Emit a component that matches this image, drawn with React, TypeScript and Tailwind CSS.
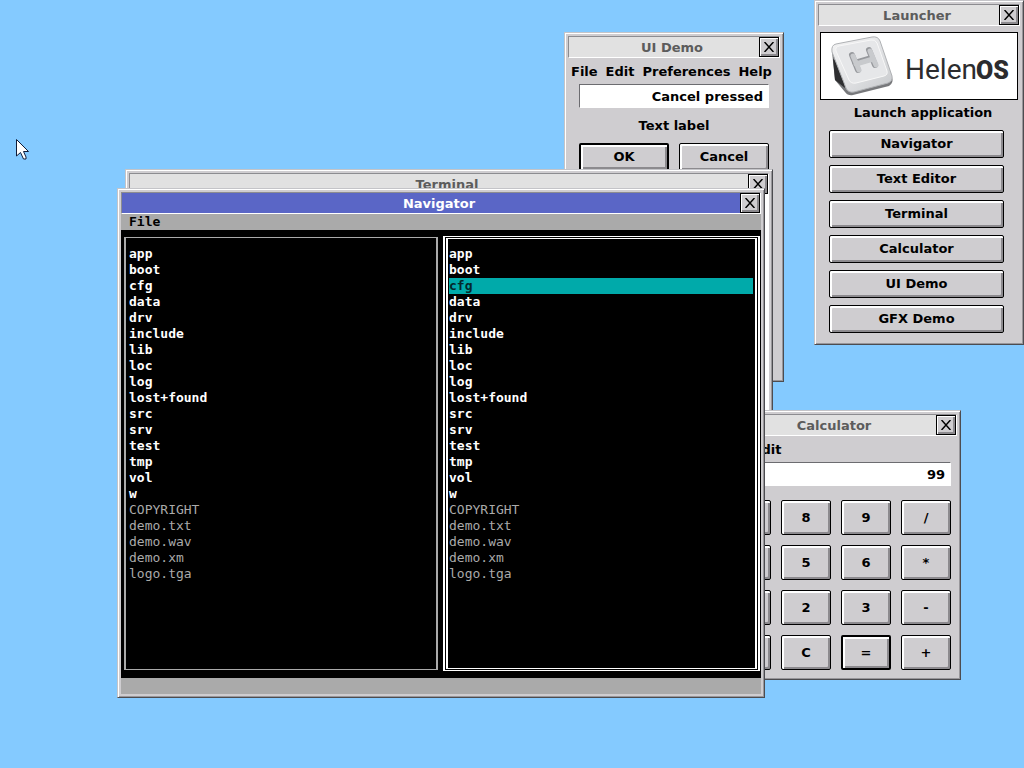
import type { ReactNode } from 'react';
import clsx from 'clsx';

const folders = ['app', 'boot', 'cfg', 'data', 'drv', 'include', 'lib', 'loc', 'log', 'lost+found', 'src', 'srv', 'test', 'tmp', 'vol', 'w'];
const files = ['COPYRIGHT', 'demo.txt', 'demo.wav', 'demo.xm', 'logo.tga'];
const launchers = ['Navigator', 'Text Editor', 'Terminal', 'Calculator', 'UI Demo', 'GFX Demo'];
const keys = ['7', '8', '9', '/', '4', '5', '6', '*', '1', '2', '3', '-', '0', 'C', '=', '+'];

type WindowProps = {
  title: string;
  className: string;
  active?: boolean;
  children: ReactNode;
};

function Window({ title, className, active, children }: WindowProps) {
  return (
    <section
      aria-label={title}
      className={clsx(
        'absolute flex flex-col border border-t-[#c4c4c8] border-l-[#c4c4c8] border-r-[#4c4c50] border-b-[#4c4c50] bg-[#cfcdd0] p-[3px] shadow-[inset_1px_1px_0_#fff,inset_-1px_-1px_0_#98969a]',
        className
      )}
    >
      <header
        className={clsx(
          'flex h-[22px] shrink-0 items-center border border-t-[#8c8c90] border-l-[#8c8c90] border-r-white border-b-white pl-4',
          active ? 'bg-[#5a66c6] text-white' : 'bg-[#e1e1e1] text-[#5c5c5c]'
        )}
      >
        <h2 className="flex-1 pt-px text-center">{title}</h2>
        <button
          aria-label={`Close ${title}`}
          className="flex size-5 items-center justify-center border border-black bg-[#cfcdd0] shadow-[inset_1px_1px_0_#fff,inset_-2px_-2px_0_#8c8a8e]"
        >
          <svg viewBox="0 0 10 10" className="size-[10px] stroke-black stroke-[1.5]">
            <path d="M0.5 0L9.5 10M9.5 0L0.5 10" />
          </svg>
        </button>
      </header>
      {children}
    </section>
  );
}

function Button({ label, className, isDefault }: { label: string; className: string; isDefault?: boolean }) {
  return (
    <button
      className={clsx(
        'rounded-[2px] border-black bg-[#cfcdd0] text-center shadow-[inset_2px_2px_0_#fff,inset_-2px_-2px_0_#8c8a8e]',
        isDefault ? 'border-2' : 'border',
        className
      )}
    >
      {label}
    </button>
  );
}

function Menu({ items }: { items: string[] }) {
  return (
    <nav className="flex h-[26px] items-center gap-2 pt-px pl-[3px]">
      {items.map((item) => (
        <button key={item}>{item}</button>
      ))}
    </nav>
  );
}

function Entry({ label, value }: { label: string; value: string }) {
  return (
    <input
      aria-label={label}
      defaultValue={value}
      className="h-6 w-full border border-t-[#6c6c70] border-l-[#6c6c70] border-r-white border-b-white bg-white pr-[5px] text-right outline-none"
    />
  );
}

function FileList({ selected }: { selected?: string }) {
  return (
    <ul className="leading-4">
      {folders.map((name) => (
        <li key={name}>
          <button className={clsx('block w-full text-left font-bold', name === selected ? 'bg-[#00aaaa] text-[#04282c]' : 'text-white')}>
            {name}
          </button>
        </li>
      ))}
      {files.map((name) => (
        <li key={name}>
          <button className="block w-full text-left text-[#aaaaaa]">{name}</button>
        </li>
      ))}
    </ul>
  );
}

function Logo() {
  return (
    <svg viewBox="0 0 196 66" className="block w-full" role="img" aria-label="HelenOS">
      <defs>
        <linearGradient id="key" x1="0" y1="0" x2="1" y2="1">
          <stop offset="0" stopColor="#f4f4f4" />
          <stop offset="0.5" stopColor="#e2e3e5" />
          <stop offset="1" stopColor="#c6c8cb" />
        </linearGradient>
      </defs>
      <path d="M11 19L14 47L24 59Q27 63 32 62L68 53Q73 50 71 44L66 30Z" fill="#77787b" />
      <path d="M12 26L14 47L24 55L21 32Z" fill="#2e2e30" />
      <path d="M15 11L51 4Q57 3 59 8L71 43Q72 48 67 50L33 59Q27 60 25 55L11 19Q10 12 15 11Z" fill="url(#key)" stroke="#b0b2b5" />
      <path d="M18 13L50 7Q54 6 56 10L66 38Q67 42 63 43L35 50Q30 51 28 47L15 18Q14 14 18 13Z" fill="#e6e7e9" stroke="#f8f8f8" />
      <g fill="none" strokeLinecap="round">
        <path d="M31 22L37 37M48 17L54 32M34 30L51 25" stroke="#96989c" strokeWidth="6" />
        <path d="M32 23L38 37M49 18L55 32M35 31L52 26" stroke="#c8cacd" strokeWidth="5" />
      </g>
      <text x="84" y="46" fill="#2c2c2e" className="font-['Roboto',sans-serif] text-[28px] font-normal">Helen</text>
      <text x="155" y="46" fill="#2c2c2e" className="font-['Roboto',sans-serif] text-[25px] font-black">OS</text>
    </svg>
  );
}

export default function App() {
  return (
    <main className="relative min-h-screen overflow-hidden bg-[#84caff] font-['DejaVu_Sans',sans-serif] text-[13px] leading-5 font-bold text-black">
      <Window title="Launcher" className="top-0 right-0 w-[210px] pb-[11px]">
        <div className="mx-[2px] mt-[6px] border border-black bg-white">
          <Logo />
        </div>
        <p className="pt-[3px] pb-[7px] pl-2 text-center">Launch application</p>
        <div className="flex flex-col gap-[7px] pr-4 pl-[11px]">
          {launchers.map((name) => (
            <Button key={name} label={name} className="h-7" />
          ))}
        </div>
      </Window>

      <Window title="UI Demo" className="top-8 left-[564px] h-[350px] w-[220px]">
        <Menu items={['File', 'Edit', 'Preferences', 'Help']} />
        <div className="flex flex-col px-[11px]">
          <Entry label="Status" value="Cancel pressed" />
          <p className="pt-2 pb-[7px] text-center">Text label</p>
          <div className="grid grid-cols-2 gap-[10px]">
            <Button label="OK" className="h-7" isDefault />
            <Button label="Cancel" className="h-7" />
          </div>
        </div>
      </Window>

      <Window title="Terminal" className="top-[169px] left-[125px] h-[500px] w-[648px]">
        <div className="flex-1 bg-white" />
      </Window>

      <Window title="Calculator" className="top-[410px] left-[711px] w-[250px] pb-[9px]">
        <Menu items={['File', 'Edit']} />
        <div className="px-[6px]">
          <Entry label="Result" value="99" />
          <div className="mt-[14px] grid grid-cols-4 gap-[10px]">
            {keys.map((key) => (
              <Button key={key} label={key} className="h-[35px]" isDefault={key === '='} />
            ))}
          </div>
        </div>
      </Window>

      <Window title="Navigator" className="top-[188px] left-[117px] w-[648px]" active>
        <div className="flex h-[480px] flex-col bg-black font-['DejaVu_Sans_Mono',monospace] font-normal">
          <nav className="flex h-4 items-center bg-[#aaaaaa] pl-2 leading-4">
            <button className="font-bold">File</button>
          </nav>
          <div className="grid flex-1 grid-cols-[314fr_317fr] gap-[5px] pt-[6px] pr-px pb-[7px] pl-[3px]">
            <div className="my-px border-x-2 border-y border-[#aaaaaa] pt-2 pr-[2px] pl-[3px]">
              <FileList />
            </div>
            <div className="flex border-x-2 border-y border-white p-px">
              <div className="flex-1 border-x-2 border-y border-white pt-[7px] pr-[2px] pl-px">
                <FileList selected="cfg" />
              </div>
            </div>
          </div>
          <footer className="h-4 bg-[#aaaaaa]" />
        </div>
      </Window>

      <svg viewBox="0 0 13 21" className="absolute top-[139px] left-4 h-[21px] w-[13px]">
        <path d="M0.5 0.5V17L4.5 13.5L7.5 20H10V18L7.5 12.5H12.5Z" fill="#fff" stroke="#101c38" />
      </svg>
    </main>
  );
}
